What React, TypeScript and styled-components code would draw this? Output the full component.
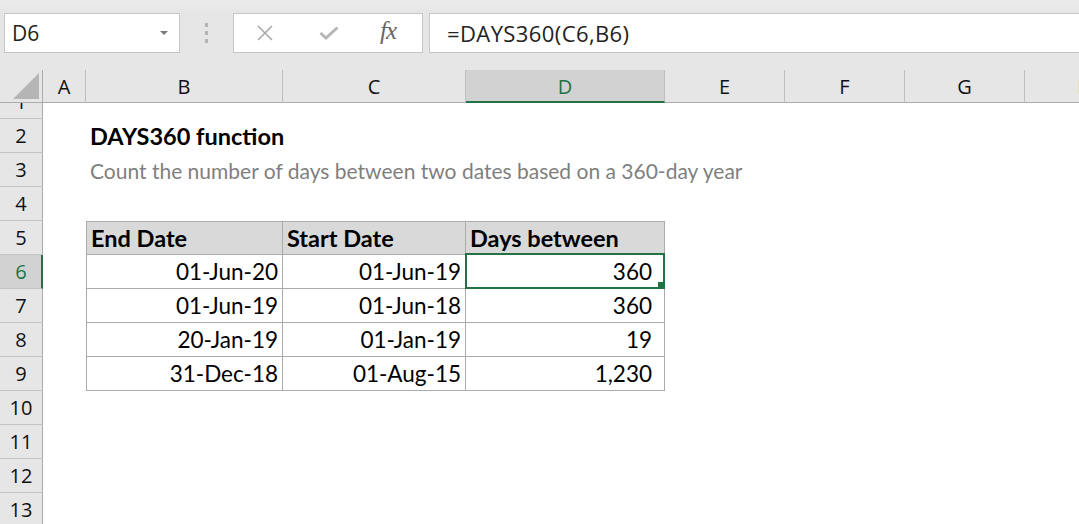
import * as React from 'react';
import styled, { createGlobalStyle, css } from 'styled-components';

const GREEN = '#217346';
const UI_FONT = '"Open Sans", "Noto Sans", sans-serif';
const CELL_FONT = 'Lato, "Noto Sans", sans-serif';

const columns = [
  { key: 'A', width: 43 },
  { key: 'B', width: 197 },
  { key: 'C', width: 183 },
  { key: 'D', width: 199 },
  { key: 'E', width: 120 },
  { key: 'F', width: 120 },
  { key: 'G', width: 120 },
  { key: 'H', width: 120 },
];

const dataRows = [
  ['01-Jun-20', '01-Jun-19', '360'],
  ['01-Jun-19', '01-Jun-18', '360'],
  ['20-Jan-19', '01-Jan-19', '19'],
  ['31-Dec-18', '01-Aug-15', '1,230'],
];

const GlobalStyle = createGlobalStyle`
  html, body {
    margin: 0;
    padding: 0;
    background: #fff;
    overflow: hidden;
  }
`;

const Window = styled.div`
  width: 1079px;
  height: 524px;
  overflow: hidden;
  display: flex;
  flex-direction: column;
  background: #fff;
`;

/* ---------- formula bar ---------- */

const FormulaBar = styled.div`
  height: 70px;
  flex: none;
  display: flex;
  align-items: flex-start;
  padding: 13px 0 0 4px;
  box-sizing: border-box;
  background: linear-gradient(#ebebeb 0, #e6e6e6 12px);
`;

const NameBox = styled.div`
  width: 176px;
  height: 40px;
  box-sizing: border-box;
  border: 1px solid #c6c6c6;
  background: #fff;
  display: flex;
  align-items: center;
  justify-content: space-between;
  padding: 0 11px 0 7px;
  font-family: ${UI_FONT};
  font-size: 21px;
  color: #222;
`;

const DropArrow = styled.span`
  width: 0;
  height: 0;
  border-left: 4px solid transparent;
  border-right: 4px solid transparent;
  border-top: 4px solid #7a7a7a;
`;

const Grip = styled.div`
  width: 53px;
  height: 40px;
  display: flex;
  flex-direction: column;
  align-items: center;
  justify-content: center;
  gap: 4px;
`;

const GripDot = styled.span`
  width: 3px;
  height: 4px;
  background: #b4b4b4;
`;

const ButtonsBox = styled.div`
  width: 190px;
  height: 40px;
  box-sizing: border-box;
  border: 1px solid #c6c6c6;
  background: #fff;
  display: flex;
  align-items: center;
  padding-left: 22px;
`;

const BarButton = styled.span<{ $w: number }>`
  width: ${(p) => p.$w}px;
  display: flex;
  align-items: center;
  justify-content: flex-start;
`;

const Fx = styled.span`
  font-family: "Liberation Serif", "DejaVu Serif", serif;
  font-style: italic;
  font-size: 25px;
  color: #666;
  letter-spacing: -1px;
  margin-top: -5px;
`;

const FormulaInput = styled.div`
  flex: 1;
  margin-left: 6px;
  height: 40px;
  box-sizing: border-box;
  border: 1px solid #c6c6c6;
  border-right: none;
  background: #fff;
  display: flex;
  align-items: center;
  padding-left: 17px;
  font-family: ${UI_FONT};
  font-size: 22px;
  letter-spacing: 0.4px;
  color: #222;
  white-space: nowrap;
`;

/* ---------- grid ---------- */

const Sheet = styled.div`
  display: flex;
  flex-direction: column;
  flex: 1;
  overflow: hidden;
`;

const Row = styled.div<{ $h: number }>`
  display: flex;
  flex: none;
  height: ${(p) => p.$h}px;
`;

const Corner = styled.div`
  width: 43px;
  flex: none;
  box-sizing: border-box;
  background: #e6e6e6;
  border-right: 1px solid #ababab;
  border-bottom: 1px solid #ababab;
  position: relative;
`;

const CornerTriangle = styled.svg`
  position: absolute;
  right: 3px;
  bottom: 3px;
`;

const ColHeader = styled.div<{ $w: number; $active?: boolean }>`
  width: ${(p) => p.$w}px;
  flex: none;
  box-sizing: border-box;
  background: ${(p) => (p.$active ? '#d2d2d2' : '#e6e6e6')};
  border-right: 1px solid #bdbdbd;
  border-bottom: ${(p) => (p.$active ? `2px solid ${GREEN}` : '1px solid #ababab')};
  display: flex;
  align-items: center;
  justify-content: center;
  padding-top: ${(p) => (p.$active ? 1 : 0)}px;
  font-family: ${UI_FONT};
  font-size: 20px;
  color: ${(p) => (p.$active ? GREEN : '#111')};
`;

const RowHeader = styled.div<{ $active?: boolean; $clipped?: boolean }>`
  width: 43px;
  flex: none;
  box-sizing: border-box;
  background: ${(p) => (p.$active ? '#d2d2d2' : '#e6e6e6')};
  border-right: ${(p) => (p.$active ? `2px solid ${GREEN}` : '1px solid #ababab')};
  border-bottom: 1px solid #c4c4c4;
  display: flex;
  justify-content: center;
  align-items: ${(p) => (p.$clipped ? 'flex-end' : 'center')};
  overflow: hidden;
  font-family: ${UI_FONT};
  font-size: 20px;
  color: ${(p) => (p.$active ? GREEN : '#111')};
  padding-left: ${(p) => (p.$active ? 1 : 0)}px;
`;

const RowLabel = styled.span`
  line-height: 33px;
  flex: none;
`;

type CellProps = {
  $w: number;
  $boxed?: boolean;
  $top?: boolean;
  $left?: boolean;
  $head?: boolean;
  $right?: boolean;
  $pad?: number;
};

const Cell = styled.div<CellProps>`
  width: ${(p) => p.$w}px;
  flex: none;
  box-sizing: border-box;
  position: relative;
  display: flex;
  align-items: center;
  justify-content: ${(p) => (p.$right ? 'flex-end' : 'flex-start')};
  padding: 0 ${(p) => p.$pad ?? 4}px 0 4px;
  white-space: nowrap;
  font-family: ${CELL_FONT};
  font-size: 22.5px;
  color: #000;
  ${(p) =>
    p.$boxed &&
    css`
      border-right: 1px solid #ababab;
      border-bottom: 1px solid #ababab;
    `}
  ${(p) => p.$top && 'border-top: 1px solid #ababab;'}
  ${(p) => p.$left && 'border-left: 1px solid #ababab;'}
  ${(p) =>
    p.$head &&
    css`
      background: #d9d9d9;
      font-weight: 700;
      font-size: 23.5px;
    `}
`;

const Title = styled.span`
  font-weight: 700;
  font-size: 23.5px;
`;

const Subtitle = styled.span`
  color: #7f7f7f;
  font-size: 21px;
`;

const Selection = styled.span`
  position: absolute;
  inset: -2px -1px -1px -1px;
  border: 2px solid ${GREEN};
  pointer-events: none;
`;

const FillHandle = styled.span`
  position: absolute;
  right: -2px;
  bottom: -2px;
  width: 7px;
  height: 7px;
  background: ${GREEN};
`;

const XIcon = () => (
  <svg width="18" height="16" viewBox="0 0 18 16">
    <path d="M2 1 L16 15 M16 1 L2 15" stroke="#a9a9a9" strokeWidth="1.6" fill="none" />
  </svg>
);

const CheckIcon = () => (
  <svg width="20" height="14" viewBox="0 0 20 14">
    <path d="M1.5 7 L7 12 L18.5 1.5" stroke="#b6b6b6" strokeWidth="3" fill="none" />
  </svg>
);

const width = (key: string) => columns.find((c) => c.key === key)!.width;

const App = () => {
  const blankAfter = (from: number) =>
    columns.slice(from).map((c) => <Cell key={c.key} $w={c.width} />);

  return (
    <Window>
      <GlobalStyle />
      <FormulaBar>
        <NameBox>
          <span>D6</span>
          <DropArrow />
        </NameBox>
        <Grip>
          <GripDot />
          <GripDot />
          <GripDot />
        </Grip>
        <ButtonsBox>
          <BarButton $w={63}>
            <XIcon />
          </BarButton>
          <BarButton $w={61}>
            <CheckIcon />
          </BarButton>
          <BarButton $w={30}>
            <Fx>fx</Fx>
          </BarButton>
        </ButtonsBox>
        <FormulaInput>=DAYS360(C6,B6)</FormulaInput>
      </FormulaBar>

      <Sheet>
        <Row $h={33}>
          <Corner>
            <CornerTriangle width="26" height="26" viewBox="0 0 26 26">
              <polygon points="26,0 26,26 0,26" fill="#b5b5b5" />
            </CornerTriangle>
          </Corner>
          {columns.map((c) => (
            <ColHeader key={c.key} $w={c.width} $active={c.key === 'D'}>
              {c.key}
            </ColHeader>
          ))}
        </Row>

        <Row $h={16}>
          <RowHeader $clipped>
            <RowLabel>1</RowLabel>
          </RowHeader>
          {blankAfter(0)}
        </Row>

        <Row $h={34}>
          <RowHeader>
            <RowLabel>2</RowLabel>
          </RowHeader>
          <Cell $w={width('A')} />
          <Cell $w={width('B')}>
            <Title>DAYS360 function</Title>
          </Cell>
          {blankAfter(2)}
        </Row>

        <Row $h={34}>
          <RowHeader>
            <RowLabel>3</RowLabel>
          </RowHeader>
          <Cell $w={width('A')} />
          <Cell $w={width('B')}>
            <Subtitle>Count the number of days between two dates based on a 360-day year</Subtitle>
          </Cell>
          {blankAfter(2)}
        </Row>

        <Row $h={34}>
          <RowHeader>
            <RowLabel>4</RowLabel>
          </RowHeader>
          {blankAfter(0)}
        </Row>

        <Row $h={34}>
          <RowHeader>
            <RowLabel>5</RowLabel>
          </RowHeader>
          <Cell $w={width('A')} />
          <Cell $w={width('B')} $boxed $top $left $head>End Date</Cell>
          <Cell $w={width('C')} $boxed $top $head>Start Date</Cell>
          <Cell $w={width('D')} $boxed $top $head>Days between</Cell>
          {blankAfter(4)}
        </Row>

        {dataRows.map((r, i) => {
          const rowNo = i + 6;
          const active = rowNo === 6;
          return (
            <Row $h={34} key={rowNo}>
              <RowHeader $active={active}>
                <RowLabel>{rowNo}</RowLabel>
              </RowHeader>
              <Cell $w={width('A')} />
              <Cell $w={width('B')} $boxed $left $right>{r[0]}</Cell>
              <Cell $w={width('C')} $boxed $right>{r[1]}</Cell>
              <Cell $w={width('D')} $boxed $right $pad={12}>
                {r[2]}
                {active && (
                  <Selection>
                    <FillHandle />
                  </Selection>
                )}
              </Cell>
              {blankAfter(4)}
            </Row>
          );
        })}

        {[10, 11, 12, 13].map((n) => (
          <Row $h={34} key={n}>
            <RowHeader>
              <RowLabel>{n}</RowLabel>
            </RowHeader>
            {blankAfter(0)}
          </Row>
        ))}
      </Sheet>
    </Window>
  );
};

export default App;
